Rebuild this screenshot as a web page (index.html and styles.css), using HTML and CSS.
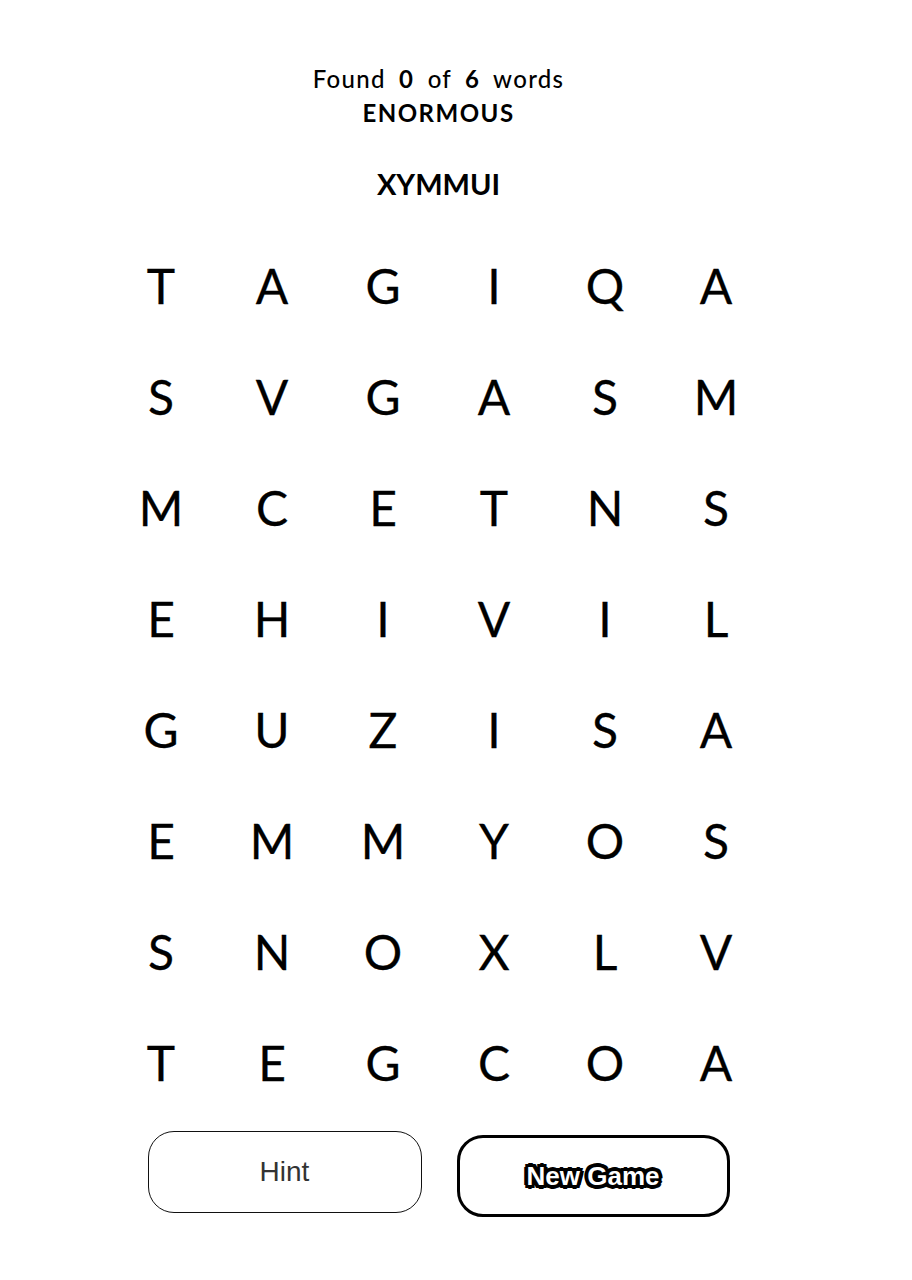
FILE: index.html
```html
<!DOCTYPE html>
<html>
<head>
<meta charset="utf-8">
<link rel="stylesheet" href="styles.css">
</head>
<body>
<div class="app">
  <div class="status">Found <b>0</b> of <b>6</b> words</div>
  <div class="target">ENORMOUS</div>
  <div class="scramble">XYMMUI</div>
  <div class="grid">
    <span>T</span><span>A</span><span>G</span><span>I</span><span>Q</span><span>A</span>
    <span>S</span><span>V</span><span>G</span><span>A</span><span>S</span><span>M</span>
    <span>M</span><span>C</span><span>E</span><span>T</span><span>N</span><span>S</span>
    <span>E</span><span>H</span><span>I</span><span>V</span><span>I</span><span>L</span>
    <span>G</span><span>U</span><span>Z</span><span>I</span><span>S</span><span>A</span>
    <span>E</span><span>M</span><span>M</span><span>Y</span><span>O</span><span>S</span>
    <span>S</span><span>N</span><span>O</span><span>X</span><span>L</span><span>V</span>
    <span>T</span><span>E</span><span>G</span><span>C</span><span>O</span><span>A</span>
  </div>
  <div class="actions">
    <button class="btn hint">Hint</button>
    <button class="btn new">New Game</button>
  </div>
</div>
</body>
</html>
```
FILE: styles.css
```css
html, body {
  margin: 0;
  padding: 0;
  background: #fff;
}
.app {
  width: 877px;
  padding-top: 62px;
  display: flex;
  flex-direction: column;
  align-items: center;
  font-family: Lato, "Noto Sans", sans-serif;
  color: #000;
}
.status {
  font-size: 24px;
  line-height: 34px;
  font-weight: 500;
  word-spacing: 6px;
  letter-spacing: 1.3px;
}
.status b {
  font-weight: 700;
}
.target {
  font-size: 24px;
  line-height: 34px;
  font-weight: 700;
  letter-spacing: 1.5px;
}
.scramble {
  margin-top: 34px;
  font-size: 29px;
  line-height: 40px;
  font-weight: 700;
}
.grid {
  margin-top: 26px;
  display: grid;
  grid-template-columns: repeat(6, 111px);
  grid-auto-rows: 111px;
}
.grid span {
  display: flex;
  align-items: center;
  justify-content: center;
  font-size: 48px;
  font-weight: 400;
  -webkit-text-stroke: 0.3px #000;
}
.actions {
  margin-top: 13px;
  display: flex;
  gap: 35px;
  align-items: flex-start;
}
.btn {
  background: #fff;
  height: 82px;
  border-radius: 26px;
  font-family: "Liberation Sans", Arial, sans-serif;
  cursor: pointer;
}
.hint {
  width: 274px;
  border: 1px solid #111;
  font-size: 28px;
  color: #333;
}
.new {
  margin-top: 4px;
  width: 273px;
  border: 3px solid #000;
  font-size: 26px;
  font-weight: 700;
  color: #fff;
  text-shadow: 2px 0 0 #000, -2px 0 0 #000, 0 2px 0 #000, 0 -2px 0 #000,
    2px 2px 0 #000, -2px -2px 0 #000, 2px -2px 0 #000, -2px 2px 0 #000,
    3px 0 0 #000, -3px 0 0 #000, 0 3px 0 #000, 0 -3px 0 #000,
    3px 3px 0 #000, -3px -3px 0 #000, 3px -3px 0 #000, -3px 3px 0 #000,
    4px 0 0 #000, -4px 0 0 #000, 0 4px 0 #000, 0 -4px 0 #000;
}
```
